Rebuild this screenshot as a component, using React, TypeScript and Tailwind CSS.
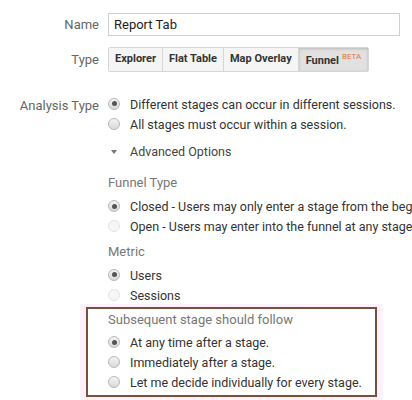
import React from "react";

const FONT = "font-['Roboto','Liberation_Sans',sans-serif]";

function Radio({ checked = false, disabled = false }: { checked?: boolean; disabled?: boolean }) {
  return (
    <span
      className={`relative -mt-[3px] flex h-[12px] w-[12px] shrink-0 items-center justify-center rounded-full border ${
        disabled
          ? "border-[#e4e4e4] bg-[#f6f6f6]"
          : "border-[#b8b8b8] bg-gradient-to-b from-[#f4f4f4] to-[#d9d9d9]"
      }`}
    >
      {checked && <span className="h-[5px] w-[5px] rounded-full bg-[#555]" />}
    </span>
  );
}

function Option({
  label,
  checked,
  disabled,
}: {
  label: string;
  checked?: boolean;
  disabled?: boolean;
}) {
  return (
    <div className="flex h-[20px] items-center gap-[10px] whitespace-nowrap">
      <Radio checked={checked} disabled={disabled} />
      <span className="text-[12.5px] text-[#333]">{label}</span>
    </div>
  );
}

const TYPES = ["Explorer", "Flat Table", "Map Overlay"];

export default function App() {
  return (
    <div className={`${FONT} h-[400px] w-[412px] overflow-hidden bg-white pt-[13px]`}>
      {/* Name */}
      <div className="flex items-center">
        <span className="w-[108px] pr-[9px] text-right text-[13px] text-[#666]">Name</span>
        <div className="flex h-[23px] w-[292px] items-center border border-[#cfcfcf] px-[5px] text-[13px] text-[#222]">
          Report Tab
        </div>
      </div>

      {/* Type */}
      <div className="mt-[11px] flex items-center">
        <span className="w-[108px] pr-[9px] text-right text-[13px] text-[#666]">Type</span>
        <div className="flex h-[25px] rounded-[2px] border border-[#d6d6d6] text-[11px] font-bold text-[#333]">
          {TYPES.map((t) => (
            <span
              key={t}
              className="flex items-center border-r border-[#d6d6d6] bg-[#f5f5f5] px-[6px]"
            >
              {t}
            </span>
          ))}
          <span className="flex items-start bg-[#e1e1e1] px-[7px] pt-[5px] shadow-[inset_0_1px_3px_rgba(0,0,0,0.18)]">
            Funnel
            <span className="ml-[3px] -mt-[2px] text-[8px] font-normal text-[#e8762d]">BETA</span>
          </span>
        </div>
      </div>

      {/* Analysis type */}
      <div className="mt-[23px] flex">
        <span className="w-[108px] pr-[9px] pt-[1px] text-right text-[13px] text-[#666]">
          Analysis Type
        </span>
        <div className="flex flex-col">
          <Option label="Different stages can occur in different sessions." checked />
          <Option label="All stages must occur within a session." />
          <div className="mt-[7px] flex h-[20px] items-center gap-[10px]">
            <span className="flex w-[12px] justify-center">
              <span className="h-0 w-0 border-x-[3.5px] border-t-[4px] border-x-transparent border-t-[#777]" />
            </span>
            <span className="text-[12.5px] text-[#444]">Advanced Options</span>
          </div>
        </div>
      </div>

      <div className="ml-[108px] flex flex-col">
        <div className="mt-[11px] text-[13px] text-[#777]">Funnel Type</div>
        <div className="mt-[5px] flex flex-col">
          <Option label="Closed - Users may only enter a stage from the beginning." checked />
          <Option label="Open - Users may enter into the funnel at any stage." disabled />
        </div>
        <div className="mt-[4px] text-[13px] text-[#777]">Metric</div>
        <div className="mt-[5px] flex flex-col">
          <Option label="Users" checked />
          <Option label="Sessions" disabled />
        </div>
      </div>

      {/* Highlighted group */}
      <div className="ml-[80px] -mt-[2px] w-[303px] bg-[#fdf2fb] px-[6px] pt-[3px] pb-[7px]">
        <div className="border-2 border-[#7a4f3c] bg-white pl-[20px] pt-[1px] pb-[1px]">
          <div className="text-[13px] text-[#777]">Subsequent stage should follow</div>
          <div className="mt-[4px] flex flex-col">
            <Option label="At any time after a stage." checked />
            <Option label="Immediately after a stage." />
            <Option label="Let me decide individually for every stage." />
          </div>
        </div>
      </div>
    </div>
  );
}
